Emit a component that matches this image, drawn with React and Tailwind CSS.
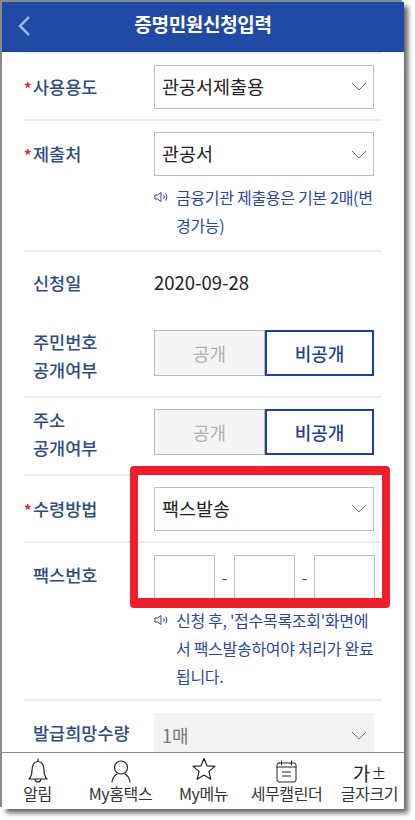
const FONT = "font-['Noto_Sans_CJK_KR','Noto_Sans',sans-serif]";

function Chevron() {
  return (
    <svg width="16" height="9" viewBox="0 0 16 9" fill="none" className="shrink-0">
      <path d="M1 1l7 7 7-7" stroke="#6f7480" strokeWidth="1" />
    </svg>
  );
}

function Select({ value, disabled }) {
  return (
    <div
      className={
        disabled
          ? "flex h-[44px] w-[220px] items-center justify-between bg-[#f3f3f3] pl-[8px] pr-[7px] text-[18px] text-[#777]"
          : "flex h-[44px] w-[220px] items-center justify-between border border-[#b9bcc8] bg-white pl-[7px] pr-[6px] text-[18.5px] text-[#222]"
      }
    >
      <span>{value}</span>
      <Chevron />
    </div>
  );
}

function Label({ required, children }) {
  return (
    <div className="relative w-[130px] shrink-0 pl-[9px] text-[17.500px] font-medium leading-[28px] text-[#2f4c7e]">
      {required && (
        <span className="absolute left-0 top-[1px] text-[15px] font-bold text-[#e8232a]">*</span>
      )}
      {children}
    </div>
  );
}

function Toggle() {
  return (
    <div className="flex h-[46px] w-[220px] text-[18px]">
      <div className="flex w-[111px] items-center justify-center border border-[#b9bcc8] bg-[#f5f5f5] text-[#b0b0b0]">
        공개
      </div>
      <div className="flex w-[109px] items-center justify-center border-2 border-[#1f3f9d] bg-white font-medium text-[#1f3f9d]">
        비공개
      </div>
    </div>
  );
}

function Note({ children }) {
  return (
    <div className="mt-[7px] flex w-[220px] text-[16px] leading-[28px] tracking-[-0.3px] text-[#2a46a4]">
      <svg width="15" height="12" viewBox="0 0 15 12" fill="none" className="mt-[8px] mr-[7px] shrink-0" stroke="#2a46a4" strokeWidth="1">
        <path d="M1 4h2.500L7 1.500v9L3.500 8H1z" />
        <path d="M9.500 4c1 1.200 1 2.800 0 4M11.500 2.500c1.700 2 1.700 5 0 7" />
      </svg>
      <span className="break-all">{children}</span>
    </div>
  );
}

function Row({ className, children }) {
  return <div className={"mx-[22px] flex border-b-2 border-[#ebebf3] " + className}>{children}</div>;
}

function NavItem({ icon, label }) {
  return (
    <div className="flex flex-col items-center">
      <div className="flex h-[30px] items-end">{icon}</div>
      <span className="whitespace-nowrap text-[16px] leading-[20px] tracking-[-0.4px] text-[#333]">{label}</span>
    </div>
  );
}

const iconProps = { fill: "none", stroke: "#222", strokeWidth: 1.2, strokeLinejoin: "round", strokeLinecap: "round" };

export default function App() {
  return (
    <div className={"relative h-[820px] w-[415px] overflow-hidden bg-white " + FONT}>
      <div className="ml-[2px] mt-[2px] flex h-[807px] w-[402px] flex-col overflow-hidden bg-white shadow-[4px_4px_5px_rgba(60,60,60,0.8),-2px_-2px_0_#8c8c8c]">
        <header className="relative flex h-[50px] shrink-0 items-center justify-center border-b border-[#1640a8] bg-[#214aa4] pb-[6px]">
          <svg width="14" height="22" viewBox="0 0 14 22" fill="none" className="absolute left-[15px] top-[13px]">
            <path d="M12 2L3 11l9 9" stroke="#9db4de" strokeWidth="2.500" />
          </svg>
          <h1 className="text-[19px] font-bold leading-none tracking-[-0.3px] text-white">증명민원신청입력</h1>
        </header>

        <main className="min-h-0 flex-1 overflow-hidden">
          <div className="mx-[22px] h-[2px] bg-[#ebebf3]" />
          <Row className="h-[67px] items-center">
            <Label required>사용용도</Label>
            <Select value="관공서제출용" />
          </Row>
          <Row className="h-[131px] items-start pt-[11px]">
            <div className="pt-[8px]">
              <Label required>제출처</Label>
            </div>
            <div>
              <Select value="관공서" />
              <Note>금융기관 제출용은 기본 2매(변경가능)</Note>
            </div>
          </Row>
          <div className="mx-[22px] flex h-[67px] items-center pb-[6px]">
            <Label>신청일</Label>
            <span className="text-[18.500px] text-[#222]">2020-09-28</span>
          </div>
          <Row className="h-[79px] items-start">
            <div className="mt-[9px]">
              <Label>주민번호<br />공개여부</Label>
            </div>
            <div className="mt-[11px]">
              <Toggle />
            </div>
          </Row>
          <Row className="h-[78px] items-start">
            <div className="mt-[8px]">
              <Label>주소<br />공개여부</Label>
            </div>
            <div className="mt-[11px]">
              <Toggle />
            </div>
          </Row>
          <Row className="h-[67px] items-center">
            <Label required>수령방법</Label>
            <Select value="팩스발송" />
          </Row>
          <Row className="h-[158px] items-start pt-[12px]">
            <div className="pt-[6px]">
              <Label>팩스번호</Label>
            </div>
            <div>
              <div className="flex w-[221px] items-center justify-between text-[16px] text-[#444]">
                <div className="h-[44px] w-[61px] border border-[#b9bcc8]" />
                <span>-</span>
                <div className="h-[44px] w-[61px] border border-[#b9bcc8]" />
                <span>-</span>
                <div className="h-[44px] w-[61px] border border-[#b9bcc8]" />
              </div>
              <Note>신청 후, '접수목록조회'화면에서 팩스발송하여야 처리가 완료됩니다.</Note>
            </div>
          </Row>
          <div className="mx-[22px] flex h-[60px] items-start pt-[12px]">
            <div className="pt-[6px]">
              <Label>발급희망수량</Label>
            </div>
            <Select value="1매" disabled />
          </div>
        </main>

        <nav className="h-[57px] shrink-0 border-t border-[#8d8d8d] bg-white">
          <div className="-ml-[6px] grid w-[415px] grid-cols-5">
            <NavItem
              label="알림"
              icon={
                <svg width="22" height="25" viewBox="0 0 22 25" {...iconProps}>
                  <path d="M11 1v2.500M2 21c2-2 3-4 3-9 0-5 2.500-8.500 6-8.500s6 3.500 6 8.500c0 5 1 7 3 9zM8 21.500c.5 1.700 1.500 2.500 3 2.500s2.500-.8 3-2.500" />
                </svg>
              }
            />
            <NavItem
              label="My홈택스"
              icon={
                <svg width="20" height="23" viewBox="0 0 20 23" {...iconProps}>
                  <circle cx="10" cy="7.500" r="6.500" />
                  <path d="M1 22c.5-4 2.500-6.500 5-8M19 22c-.5-4-2.500-6.500-5-8" />
                </svg>
              }
            />
            <NavItem
              label="My메뉴"
              icon={
                <svg width="24" height="24" viewBox="0 0 24 24" className="mb-[2px]" {...iconProps}>
                  <path d="M12 1.500l3 7.300 8 .6-6.100 5 1.900 7.800L12 18l-6.800 4.200 1.900-7.800-6.100-5 8-.6z" />
                </svg>
              }
            />
            <NavItem
              label="세무캘린더"
              icon={
                <svg width="21" height="23" viewBox="0 0 21 23" {...iconProps} strokeWidth="1">
                  <path d="M3 3h15a2 2 0 012 2v15a2 2 0 01-2 2H3a2 2 0 01-2-2V5a2 2 0 012-2zM1 7h19M5.500 .8v4M15.500 .8v4M6.500 12h8M6.500 16h8" />
                </svg>
              }
            />
            <NavItem
              label="글자크기"
              icon={
                <span className="mb-[2px] flex h-[18px] items-center text-[19px] leading-none text-[#222]">
                  가<span className="ml-[1px] text-[15px] leading-none">±</span>
                </span>
              }
            />
          </div>
        </nav>
      </div>

      <div className="absolute left-[130px] top-[466px] h-[142px] w-[260px] rounded-[4px] border-x-[8px] border-b-[10px] border-t-[9px] border-[#ee1f2b]" />
    </div>
  );
}
